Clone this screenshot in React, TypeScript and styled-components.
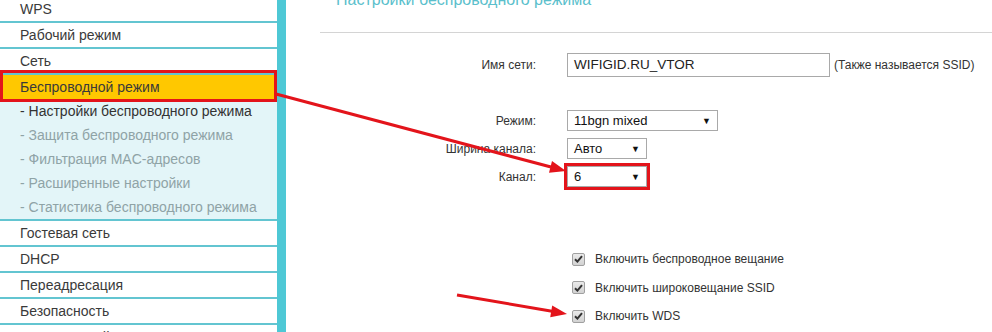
import styled, { createGlobalStyle } from 'styled-components'

const GlobalStyle = createGlobalStyle`
body{
  margin: 0;
  background: #fff;
  font-family: "Liberation Sans", Arial, sans-serif;
  overflow: hidden;
}
`

const RED = '#e3141b'

const mainMenu = ['WPS', 'Рабочий режим', 'Сеть']
const subMenu = [
  'Настройки беспроводного режима',
  'Защита беспроводного режима',
  'Фильтрация MAC-адресов',
  'Расширенные настройки',
  'Статистика беспроводного режима',
]
const bottomMenu = ['Гостевая сеть', 'DHCP', 'Переадресация', 'Безопасность', 'Родительский контроль']

const checks = ['Включить беспроводное вещание', 'Включить широковещание SSID', 'Включить WDS']

const App = () => {
  return (
    <Page>
      <GlobalStyle />
      <Sidebar>
        {mainMenu.map((m) => (
          <MenuItem key={m}>{m}</MenuItem>
        ))}
        <ActiveItem>Беспроводной режим</ActiveItem>
        <SubMenu>
          {subMenu.map((s, i) => (
            <SubItem key={s} current={i === 0}>- {s}</SubItem>
          ))}
        </SubMenu>
        {bottomMenu.map((m) => (
          <MenuItem key={m}>{m}</MenuItem>
        ))}
      </Sidebar>

      <Main>
        <Header>Настройки беспроводного режима</Header>
        <Form>
          <Row mt={20}>
            <Label>Имя сети:</Label>
            <Field>
              <TextInput>WIFIGID.RU_VTOR</TextInput>
              <Note>(Также называется SSID)</Note>
            </Field>
          </Row>
          <Row mt={33}>
            <Label>Режим:</Label>
            <Field>
              <Select w={151}>
                <span>11bgn mixed</span>
                <Caret>▼</Caret>
              </Select>
            </Field>
          </Row>
          <Row mt={7}>
            <Label>Ширина канала:</Label>
            <Field>
              <Select w={80}>
                <span>Авто</span>
                <Caret>▼</Caret>
              </Select>
            </Field>
          </Row>
          <Row mt={7}>
            <Label>Канал:</Label>
            <Field>
              <Select w={80} marked>
                <span>6</span>
                <Caret>▼</Caret>
              </Select>
            </Field>
          </Row>
          <Checks>
            {checks.map((c) => (
              <CheckRow key={c}>
                <Box>
                  <svg width="9" height="8" viewBox="0 0 9 8">
                    <path d="M1 4.3 L3.4 6.6 L8 1.2" fill="none" stroke="#333" strokeWidth="2" />
                  </svg>
                </Box>
                <CheckText>{c}</CheckText>
              </CheckRow>
            ))}
          </Checks>
        </Form>
      </Main>

      <Arrows width="992" height="332" viewBox="0 0 992 332">
        <line x1="276" y1="94" x2="551" y2="167" stroke={RED} strokeWidth="3" />
        <polygon points="566,171 549,172.7 552,161.1" fill={RED} />
        <line x1="457" y1="295" x2="552" y2="311.3" stroke={RED} strokeWidth="3" />
        <polygon points="567,314 550.2,317.2 552.2,305.4" fill={RED} />
      </Arrows>
    </Page>
  )
}

export default App

const Page = styled.div`
position: relative;
display: flex;
width: 992px;
height: 332px;
overflow: hidden;
`

const Sidebar = styled.div`
width: 277px;
flex-shrink: 0;
margin-top: -3px;
border-right: 9px solid #4ec8d5;
background: #fff;
`

const MenuItem = styled.div`
height: 24px;
line-height: 24px;
padding-left: 20px;
font-size: 14px;
color: #3a3a3a;
border-bottom: 2px solid #63c5d1;
white-space: nowrap;
`

const ActiveItem = styled.div`
position: relative;
height: 24px;
line-height: 24px;
padding-left: 20px;
font-size: 14px;
color: #3a3a3a;
background: #ffc800;

&::after{
  content: '';
  position: absolute;
  left: 0;
  right: 0;
  top: -5px;
  bottom: -3px;
  border: 3px solid ${RED};
}
`

const SubMenu = styled.div`
background: #e3f5f8;
border-bottom: 2px solid #63c5d1;
`

const SubItem = styled.div<{ current?: boolean }>`
height: 24px;
line-height: 24px;
padding-left: 20px;
font-size: 14px;
color: ${({ current }) => (current ? '#333' : '#8fa3a6')};
white-space: nowrap;
`

const Main = styled.div`
flex: 1;
padding-left: 34px;
`

const Header = styled.div`
margin-top: -10px;
padding: 0 0 22px 16px;
line-height: 20px;
font-size: 16px;
color: #5bbfcc;
border-bottom: 1px solid #d4d4d4;
`

const Form = styled.div`
display: flex;
flex-direction: column;
`

const Row = styled.div<{ mt: number }>`
display: grid;
grid-template-columns: 216px 1fr;
column-gap: 31px;
align-items: center;
margin-top: ${({ mt }) => mt}px;
`

const Label = styled.div`
text-align: right;
font-size: 12px;
color: #333;
`

const Field = styled.div`
display: flex;
align-items: center;
`

const TextInput = styled.div`
box-sizing: border-box;
width: 263px;
height: 24px;
line-height: 22px;
padding-left: 6px;
border: 1px solid #a9a9a9;
font-size: 13.5px;
color: #222;
`

const Note = styled.div`
margin-left: 4px;
font-size: 12px;
color: #333;
`

const Select = styled.div<{ w: number; marked?: boolean }>`
box-sizing: border-box;
width: ${({ w }) => w}px;
height: 21px;
display: flex;
align-items: center;
justify-content: space-between;
padding: 0 6px 0 6px;
border: 1px solid #a9a9a9;
font-size: 13px;
color: #111;
${({ marked }) => (marked ? `outline: 3px solid ${RED}; outline-offset: 0px;` : '')}
`

const Caret = styled.span`
font-size: 9px;
color: #111;
`

const Checks = styled.div`
margin-top: 58px;
padding-left: 252px;
display: flex;
flex-direction: column;
`

const CheckRow = styled.div`
display: flex;
align-items: center;
height: 28.5px;
`

const Box = styled.span`
box-sizing: border-box;
width: 13px;
height: 13px;
margin-right: 10px;
border: 1px solid #a0a0a0;
border-radius: 2px;
background: linear-gradient(#eaeaea, #d2d2d2);
display: flex;
align-items: center;
justify-content: center;
`

const CheckText = styled.span`
font-size: 12px;
color: #333;
`

const Arrows = styled.svg`
position: absolute;
left: 0;
top: 0;
pointer-events: none;
`
